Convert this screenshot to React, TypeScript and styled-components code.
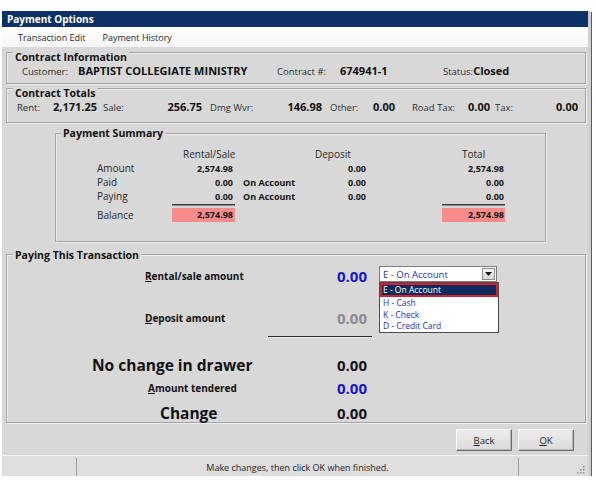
import React from 'react';
import styled, { createGlobalStyle } from 'styled-components';

const GlobalStyle = createGlobalStyle`
  *, *::before, *::after { box-sizing: border-box; }
  html, body { margin: 0; padding: 0; background: #ffffff; }
  body {
    font-family: "Open Sans", "Noto Sans", sans-serif;
    color: #1c1c1c;
  }
`;

const Page = styled.div`
  padding: 11px 0 0 2px;
`;

const Window = styled.div`
  width: 589px;
  height: 465px;
  display: flex;
  flex-direction: column;
  background: #d8d8d8;
  border-right: 3px solid #d0d0d0;
  box-shadow: 1px 1px 0 #5c5c5c;
`;

const TitleBar = styled.div`
  height: 16px;
  line-height: 16px;
  padding-left: 5px;
  background: #0d3068;
  color: #fff;
  font-size: 10px;
  font-weight: 700;
`;

const MenuBar = styled.div`
  height: 20px;
  display: flex;
  align-items: center;
  gap: 17px;
  padding-left: 16px;
  background: linear-gradient(#ffffff, #f5f5f5);
  font-size: 9px;
  color: #2a2a2a;
`;

const Body = styled.div`
  flex: 1;
  display: flex;
  flex-direction: column;
  padding: 5px 2px 0 4px;
`;

const Group = styled.section<{ $mt?: number; $ml?: number; $w?: number; $pb?: number }>`
  margin: ${(p) => p.$mt ?? 0}px 0 0 ${(p) => p.$ml ?? 0}px;
  width: ${(p) => (p.$w ? `${p.$w}px` : 'auto')};
  padding-bottom: ${(p) => p.$pb ?? 0}px;
  border: 1px solid #a6a6a6;
  box-shadow: inset 1px 1px 0 #ececec, 1px 1px 0 #ececec;
`;

// the title sits on the top border line of its group
const GroupTitle = styled.h2<{ $lift: number; $ml: number }>`
  width: fit-content;
  margin: -${(p) => p.$lift}px 0 0 ${(p) => p.$ml}px;
  padding: 0 2px;
  background: #d8d8d8;
  font-size: 10.5px;
  line-height: 14px;
  font-weight: 700;
  color: #111;
`;

/* contract information */
const InfoRow = styled.div`
  display: flex;
  align-items: baseline;
  height: 14px;
  line-height: 14px;
  padding-left: 15px;
`;

const Field = styled.div<{ $w?: number }>`
  display: flex;
  align-items: baseline;
  flex-shrink: 0;
  width: ${(p) => (p.$w ? `${p.$w}px` : 'auto')};
  white-space: nowrap;
`;

const FieldLabel = styled.span<{ $w?: number }>`
  min-width: ${(p) => p.$w ?? 0}px;
  font-size: 9.5px;
  color: #2e2e2e;
`;

const FieldValue = styled.span`
  font-size: 11px;
  font-weight: 700;
  color: #111;
`;

/* contract totals */
const TotalsRow = styled.div`
  display: flex;
  align-items: baseline;
  height: 12px;
  margin-top: 1px;
  line-height: 12px;
  padding-left: 10px;
`;

const Pair = styled.div<{ $w: number; $ml: number }>`
  display: flex;
  justify-content: space-between;
  align-items: baseline;
  width: ${(p) => p.$w}px;
  margin-left: ${(p) => p.$ml}px;
  white-space: nowrap;
`;

/* payment summary */
const SummaryGrid = styled.div`
  display: grid;
  grid-template-columns: 116px 63px 65px 66px 76px 63px;
  grid-template-rows: 14px 14px 14px 14px 5px 14px;
  align-items: center;
  padding-top: 7px;
  white-space: nowrap;
`;

type Cell = { $row: number; $col: number };

const HeadCell = styled.div<Cell & { $pl: number }>`
  grid-area: ${(p) => p.$row} / ${(p) => p.$col};
  padding-left: ${(p) => p.$pl}px;
  font-size: 10px;
  color: #2a2a2a;
`;

const RowLabel = styled.div<Cell>`
  grid-area: ${(p) => p.$row} / ${(p) => p.$col};
  padding-left: 41px;
  font-size: 10px;
  color: #2a2a2a;
`;

const Num = styled.div<Cell & { $pr?: number }>`
  grid-area: ${(p) => p.$row} / ${(p) => p.$col};
  text-align: right;
  padding-right: ${(p) => p.$pr ?? 0}px;
  font-size: 9px;
  font-weight: 700;
  color: #151515;
`;

const Tender = styled.div<Cell>`
  grid-area: ${(p) => p.$row} / ${(p) => p.$col};
  padding-left: 8px;
  font-size: 9px;
  font-weight: 700;
  color: #151515;
`;

const Rule = styled.div<Cell>`
  grid-area: ${(p) => p.$row} / ${(p) => p.$col};
  align-self: start;
  margin-top: 1px;
  height: 2px;
  border-top: 1px solid #3a3a3a;
  border-bottom: 1px solid #8e8e8e;
`;

const Balance = styled(Num)`
  align-self: stretch;
  line-height: 14px;
  background: #f98b8b;
`;

/* paying this transaction */
const PayRow = styled.div<{ $h: number; $mt: number }>`
  display: grid;
  grid-template-columns: 300px 60px auto;
  align-items: center;
  height: ${(p) => p.$h}px;
  margin-top: ${(p) => p.$mt}px;
  white-space: nowrap;
`;

const PayLabel = styled.div<{ $indent: number; $big?: boolean }>`
  padding-left: ${(p) => p.$indent}px;
  font-size: ${(p) => (p.$big ? 15.5 : 10)}px;
  font-weight: 700;
  color: #111;
`;

const toneColor = { blue: '#1616d2', gray: '#8b8b8b', black: '#111' };

const PayValue = styled.div<{ $tone: keyof typeof toneColor }>`
  text-align: right;
  font-size: 15px;
  font-weight: 700;
  color: ${(p) => toneColor[p.$tone]};
`;

const SumLine = styled.div`
  margin: 10px 0 0 261px;
  width: 104px;
  height: 2px;
  border-top: 1px solid #2e2e2e;
  border-bottom: 1px solid #efefef;
`;

const Combo = styled.div`
  position: relative;
  align-self: start;
  display: flex;
  align-items: center;
  margin-left: 12px;
  width: 118px;
  height: 16px;
  padding-left: 3px;
  background: #fff;
  border: 1px solid #7d7d7d;
  font-size: 9.5px;
  color: #2d2db4;
`;

const ComboButton = styled.span`
  display: flex;
  align-items: center;
  justify-content: center;
  margin: 0 1px 0 auto;
  width: 13px;
  height: 12px;
  background: linear-gradient(#f4f4f4, #d6d6d6);
  border: 1px solid #8a8a8a;
`;

const ComboList = styled.ul`
  position: absolute;
  top: 15px;
  left: -1px;
  width: 120px;
  margin: 0;
  padding: 0;
  list-style: none;
  background: #fff;
  border: 1px solid #4a4a4a;
`;

const ComboItem = styled.li<{ $active?: boolean }>`
  height: ${(p) => (p.$active ? 14 : 11.5)}px;
  line-height: ${(p) => (p.$active ? 10 : 11.5)}px;
  padding-left: ${(p) => (p.$active ? 1 : 3)}px;
  font-size: 8.5px;
  color: ${(p) => (p.$active ? '#fff' : '#2a2ac4')};
  background: ${(p) => (p.$active ? '#0f2b5e' : 'transparent')};
  border: ${(p) => (p.$active ? '2px solid #d6202c' : 'none')};
`;

/* footer and status bar */
const Footer = styled.div`
  height: 32px;
  display: flex;
  justify-content: flex-end;
  align-items: center;
  gap: 6px;
  padding: 2px 14px 0 0;
`;

const DialogButton = styled.button`
  width: 56px;
  height: 22px;
  padding: 0;
  font-family: inherit;
  font-size: 9.5px;
  color: #222;
  background: linear-gradient(#ececec, #dcdcdc);
  border: 1px solid;
  border-color: #fafafa #6f6f6f #6f6f6f #fafafa;
  box-shadow: inset -1px -1px 0 #b4b4b4;
`;

const StatusBar = styled.div`
  height: 21px;
  display: flex;
  border-top: 1px solid #f2f2f2;
  padding-top: 2px;
  background: #dedede;
  font-size: 9px;
  color: #222;
`;

const StatusCell = styled.div<{ $w?: number }>`
  display: flex;
  align-items: center;
  justify-content: center;
  flex: ${(p) => (p.$w ? `0 0 ${p.$w}px` : '1')};
  border-left: 1px solid #9c9c9c;
  &:first-child { border-left: none; }
`;

const Grip = styled.svg`
  margin: auto 3px 2px auto;
`;

function ArrowDown() {
  return (
    <svg width="7" height="4" viewBox="0 0 7 4">
      <path d="M0 0h7L3.5 4z" fill="#111" />
    </svg>
  );
}

const summaryRows = [
  { label: 'Amount', rental: '2,574.98', tender: '', deposit: '0.00', total: '2,574.98' },
  { label: 'Paid', rental: '0.00', tender: 'On Account', deposit: '0.00', total: '0.00' },
  { label: 'Paying', rental: '0.00', tender: 'On Account', deposit: '0.00', total: '0.00' },
];

const totals = [
  { label: 'Rent:', value: '2,171.25', w: 80, ml: 0 },
  { label: 'Sale:', value: '256.75', w: 99, ml: 6 },
  { label: 'Dmg Wvr:', value: '146.98', w: 112, ml: 8 },
  { label: 'Other:', value: '0.00', w: 65, ml: 8 },
  { label: 'Road Tax:', value: '0.00', w: 78, ml: 17 },
  { label: 'Tax:', value: '0.00', w: 83, ml: 5 },
];

export default function App() {
  return (
    <Page>
      <GlobalStyle />
      <Window>
        <TitleBar>Payment Options</TitleBar>
        <MenuBar>
          <span>Transaction Edit</span>
          <span>Payment History</span>
        </MenuBar>

        <Body>
          <Group $pb={5}>
            <GroupTitle $lift={3} $ml={6}>Contract Information</GroupTitle>
            <InfoRow>
              <Field $w={255}>
                <FieldLabel $w={56}>Customer:</FieldLabel>
                <FieldValue>BAPTIST COLLEGIATE MINISTRY</FieldValue>
              </Field>
              <Field $w={166}>
                <FieldLabel $w={63}>Contract #:</FieldLabel>
                <FieldValue>674941-1</FieldValue>
              </Field>
              <Field>
                <FieldLabel $w={29}>Status:</FieldLabel>
                <FieldValue>Closed</FieldValue>
              </Field>
            </InfoRow>
          </Group>

          <Group $mt={4} $pb={9}>
            <GroupTitle $lift={3} $ml={6}>Contract Totals</GroupTitle>
            <TotalsRow>
              {totals.map((t) => (
                <Pair key={t.label} $w={t.w} $ml={t.ml}>
                  <FieldLabel>{t.label}</FieldLabel>
                  <FieldValue>{t.value}</FieldValue>
                </Pair>
              ))}
            </TotalsRow>
          </Group>

          <Group $mt={10} $ml={49} $w={491} $pb={19}>
            <GroupTitle $lift={8} $ml={5}>Payment Summary</GroupTitle>
            <SummaryGrid>
              <HeadCell $row={1} $col={2} $pl={11}>Rental/Sale</HeadCell>
              <HeadCell $row={1} $col={4} $pl={15}>Deposit</HeadCell>
              <HeadCell $row={1} $col={6} $pl={20}>Total</HeadCell>

              {summaryRows.map((r, i) => (
                <React.Fragment key={r.label}>
                  <RowLabel $row={i + 2} $col={1}>{r.label}</RowLabel>
                  <Num $row={i + 2} $col={2} $pr={2}>{r.rental}</Num>
                  {r.tender && <Tender $row={i + 2} $col={3}>{r.tender}</Tender>}
                  <Num $row={i + 2} $col={4}>{r.deposit}</Num>
                  <Num $row={i + 2} $col={6} $pr={1}>{r.total}</Num>
                </React.Fragment>
              ))}

              <Rule $row={5} $col={2} />
              <Rule $row={5} $col={6} />

              <RowLabel $row={6} $col={1}>Balance</RowLabel>
              <Balance $row={6} $col={2} $pr={2}>2,574.98</Balance>
              <Balance $row={6} $col={6} $pr={1}>2,574.98</Balance>
            </SummaryGrid>
          </Group>

          <Group $mt={12} $pb={2}>
            <GroupTitle $lift={7} $ml={6}>Paying This Transaction</GroupTitle>
            <PayRow $h={18} $mt={4}>
              <PayLabel $indent={138}>
                <u>R</u>ental/sale amount
              </PayLabel>
              <PayValue $tone="blue">0.00</PayValue>
              <Combo>
                E - On Account
                <ComboButton>
                  <ArrowDown />
                </ComboButton>
                <ComboList>
                  <ComboItem $active>E - On Account</ComboItem>
                  <ComboItem>H - Cash</ComboItem>
                  <ComboItem>K - Check</ComboItem>
                  <ComboItem>D - Credit Card</ComboItem>
                </ComboList>
              </Combo>
            </PayRow>
            <PayRow $h={18} $mt={24}>
              <PayLabel $indent={138}>
                <u>D</u>eposit amount
              </PayLabel>
              <PayValue $tone="gray">0.00</PayValue>
            </PayRow>
            <SumLine />
            <PayRow $h={18} $mt={16}>
              <PayLabel $indent={85} $big>No change in drawer</PayLabel>
              <PayValue $tone="black">0.00</PayValue>
            </PayRow>
            <PayRow $h={16} $mt={6}>
              <PayLabel $indent={141}>
                <u>A</u>mount tendered
              </PayLabel>
              <PayValue $tone="blue">0.00</PayValue>
            </PayRow>
            <PayRow $h={18} $mt={8}>
              <PayLabel $indent={153} $big>Change</PayLabel>
              <PayValue $tone="black">0.00</PayValue>
            </PayRow>
          </Group>
        </Body>

        <Footer>
          <DialogButton>
            <u>B</u>ack
          </DialogButton>
          <DialogButton>
            <u>O</u>K
          </DialogButton>
        </Footer>

        <StatusBar>
          <StatusCell $w={74} />
          <StatusCell>Make changes, then click OK when finished.</StatusCell>
          <StatusCell $w={70}>
            <Grip width="9" height="9" viewBox="0 0 9 9">
              <g fill="#8a8a8a">
                <rect x="7" y="1" width="1.5" height="1.5" />
                <rect x="4" y="4" width="1.5" height="1.5" />
                <rect x="7" y="4" width="1.5" height="1.5" />
                <rect x="1" y="7" width="1.5" height="1.5" />
                <rect x="4" y="7" width="1.5" height="1.5" />
                <rect x="7" y="7" width="1.5" height="1.5" />
              </g>
            </Grip>
          </StatusCell>
        </StatusBar>
      </Window>
    </Page>
  );
}
